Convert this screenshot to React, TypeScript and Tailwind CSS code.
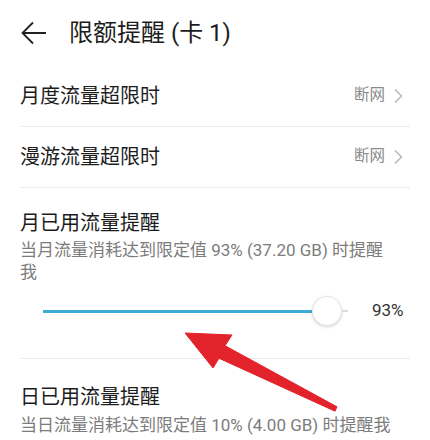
import React from "react";

const font = { fontFamily: "Roboto, 'Noto Sans CJK SC', sans-serif" };

function Chevron() {
  return (
    <svg width="10" height="16" viewBox="0 0 10 16" className="ml-[8px]">
      <path d="M2 1.5 L8.5 8 L2 14.5" fill="none" stroke="#b5b5b5" strokeWidth="1.4" />
    </svg>
  );
}

function LimitRow({ label, value }: { label: string; value: string }) {
  return (
    <div className="mx-5 h-[61px] flex items-center justify-between border-b border-[#ebebeb]">
      <span className="text-[20px] leading-[28px] text-[#1c1c1c]">{label}</span>
      <div className="flex items-center pr-[7px]">
        <span className="text-[15.5px] text-[#8a8a8a]">{value}</span>
        <Chevron />
      </div>
    </div>
  );
}

export default function App() {
  return (
    <div className="relative w-[430px] h-[440px] bg-white overflow-hidden" style={font}>
      {/* header */}
      <div className="h-[66px] flex items-center pl-[21px]">
        <svg width="26" height="24" viewBox="0 0 26 24">
          <path d="M1.5 12 H25 M12 1.5 L1.5 12 L12 22.5" fill="none" stroke="#222" strokeWidth="1.8" />
        </svg>
        <span className="ml-[22px] text-[24px] leading-[32px] text-[#1c1c1c]">限额提醒 (卡 1)</span>
      </div>

      <LimitRow label="月度流量超限时" value="断网" />
      <LimitRow label="漫游流量超限时" value="断网" />

      {/* monthly reminder */}
      <div className="mx-5 pt-[21px] pb-[32px] border-b border-[#ebebeb]">
        <div className="text-[20px] leading-[28px] text-[#1c1c1c]">月已用流量提醒</div>
        <div className="mt-[2px] pr-[12px] text-[17px] leading-[22px] text-[#7c7c7c]">
          当月流量消耗达到限定值 93% (37.20 GB) 时提醒我
        </div>
        <div className="mt-[13px] h-[30px] flex items-center pl-[23px]">
          <div className="w-[269px] h-[3px] bg-[#3caed6]" />
          <div className="w-[30px] h-[30px] rounded-full bg-white border border-[#e6e6e6] shadow-[0_1px_3px_rgba(0,0,0,0.18)]" />
          <div className="w-[6px] h-[2px] bg-[#dcdcdc]" />
          <span className="ml-[24px] text-[17px] text-[#333]">93%</span>
        </div>
      </div>

      {/* daily reminder */}
      <div className="mx-5 pt-[24px]">
        <div className="text-[20px] leading-[28px] text-[#1c1c1c]">日已用流量提醒</div>
        <div className="mt-[3px] text-[17px] leading-[22px] text-[#7c7c7c]">
          当日流量消耗达到限定值 10% (4.00 GB) 时提醒我
        </div>
      </div>

      {/* annotation arrow */}
      <svg className="absolute left-0 top-0 pointer-events-none" width="430" height="440" viewBox="0 0 430 440">
        <polygon
          points="185,333 232,335 225,345.7 337,406.8 335,411.2 219,358.3 213,368"
          fill="#e3232b"
          strokeLinejoin="round"
          stroke="#e3232b"
          strokeWidth="1"
        />
      </svg>
    </div>
  );
}
